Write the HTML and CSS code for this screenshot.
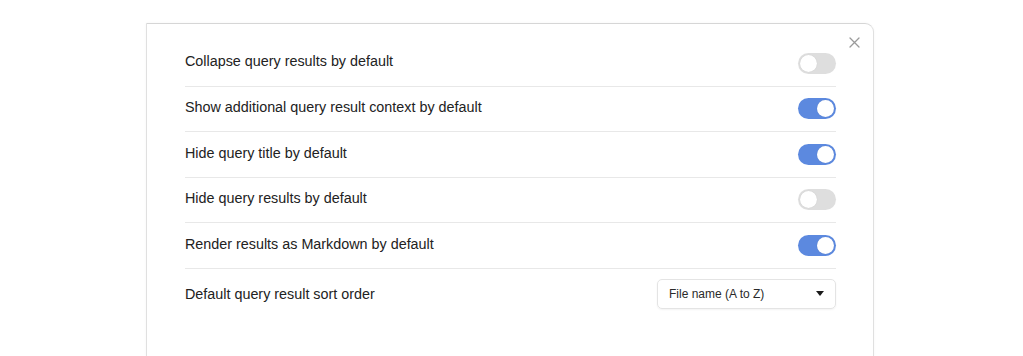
FILE: index.html
```html
<!DOCTYPE html>
<html lang="en">
<head>
  <title>Query settings</title>
  <meta charset="utf-8">
  <meta name="viewport" content="width=device-width, initial-scale=1">
  <link rel="stylesheet" href="styles.css">
</head>
<body>
  <div class="modal">
    <button class="modal__close" aria-label="Close">
      <svg width="11" height="11" viewBox="0 0 11 11" aria-hidden="true">
        <path d="M1 1 L10 10 M10 1 L1 10" stroke="#9a9a9a" stroke-width="1.3" stroke-linecap="round" fill="none"/>
      </svg>
    </button>
    <div class="settings">
      <div class="setting">
        <span class="setting__name">Collapse query results by default</span>
        <button class="toggle" aria-pressed="false"></button>
      </div>
      <div class="setting">
        <span class="setting__name">Show additional query result context by default</span>
        <button class="toggle" aria-pressed="true"></button>
      </div>
      <div class="setting">
        <span class="setting__name">Hide query title by default</span>
        <button class="toggle" aria-pressed="true"></button>
      </div>
      <div class="setting">
        <span class="setting__name">Hide query results by default</span>
        <button class="toggle" aria-pressed="false"></button>
      </div>
      <div class="setting">
        <span class="setting__name">Render results as Markdown by default</span>
        <button class="toggle" aria-pressed="true"></button>
      </div>
      <div class="setting setting--select">
        <span class="setting__name">Default query result sort order</span>
        <div class="dropdown">
          <span class="dropdown__value">File name (A to Z)</span>
          <svg class="dropdown__caret" width="8" height="5" viewBox="0 0 8 5" aria-hidden="true">
            <path d="M0 0 H8 L4 5 Z" fill="#1a1a1a"/>
          </svg>
        </div>
      </div>
    </div>
  </div>
</body>
</html>
```

FILE: styles.css
```css
*, *::before, *::after {
  margin: 0;
  padding: 0;
  box-sizing: border-box;
}

html, body {
  height: 100%;
  overflow: hidden;
}

body {
  font-family: "Liberation Sans", Arial, sans-serif;
  background-color: #ffffff;
  color: #222222;
  padding: 23px 0 0 146px;
}

.modal {
  position: relative;
  width: 728px;
  height: 333px;
  padding: 16.5px 37px 0 38px;
  border: 1px solid #e0e0e0;
  border-top-color: #d6d6d6;
  border-bottom: none;
  border-radius: 0 9px 0 0;
  background-color: #ffffff;
  box-shadow: 0 0 3px rgba(0, 0, 0, 0.04);
}

.modal__close {
  position: absolute;
  top: 13px;
  right: 13px;
  display: flex;
  border: none;
  background: none;
}

.setting {
  display: flex;
  align-items: center;
  justify-content: space-between;
  min-height: 45.5px;
  border-top: 1px solid #e8e8e8;
}

.setting:first-child {
  border-top: none;
  min-height: 45px;
}

.setting--select {
  align-items: flex-start;
  padding-top: 10px;
}

.setting__name {
  font-size: 14.35px;
  line-height: 1;
  margin-top: -3px;
}

.setting--select .setting__name {
  margin-top: 8px;
}

.toggle {
  position: relative;
  width: 38px;
  height: 21px;
  border: none;
  border-radius: 11px;
  background-color: #dedede;
}

.toggle::after {
  content: "";
  position: absolute;
  top: 2px;
  left: 2px;
  width: 17px;
  height: 17px;
  border-radius: 50%;
  background-color: #ffffff;
  box-shadow: 0 0 1px rgba(0, 0, 0, 0.15);
}

.toggle[aria-pressed='true'] {
  background-color: #5c89df;
}

.toggle[aria-pressed='true']::after {
  left: 19px;
}

.dropdown {
  display: flex;
  align-items: center;
  justify-content: space-between;
  width: 179px;
  height: 30px;
  padding: 0 11px 0 11px;
  border: 1px solid #e4e4e4;
  border-radius: 5px;
  box-shadow: 0 1px 2px rgba(0, 0, 0, 0.05);
}

.dropdown__value {
  font-size: 12px;
  color: #2a2a2a;
}
```
